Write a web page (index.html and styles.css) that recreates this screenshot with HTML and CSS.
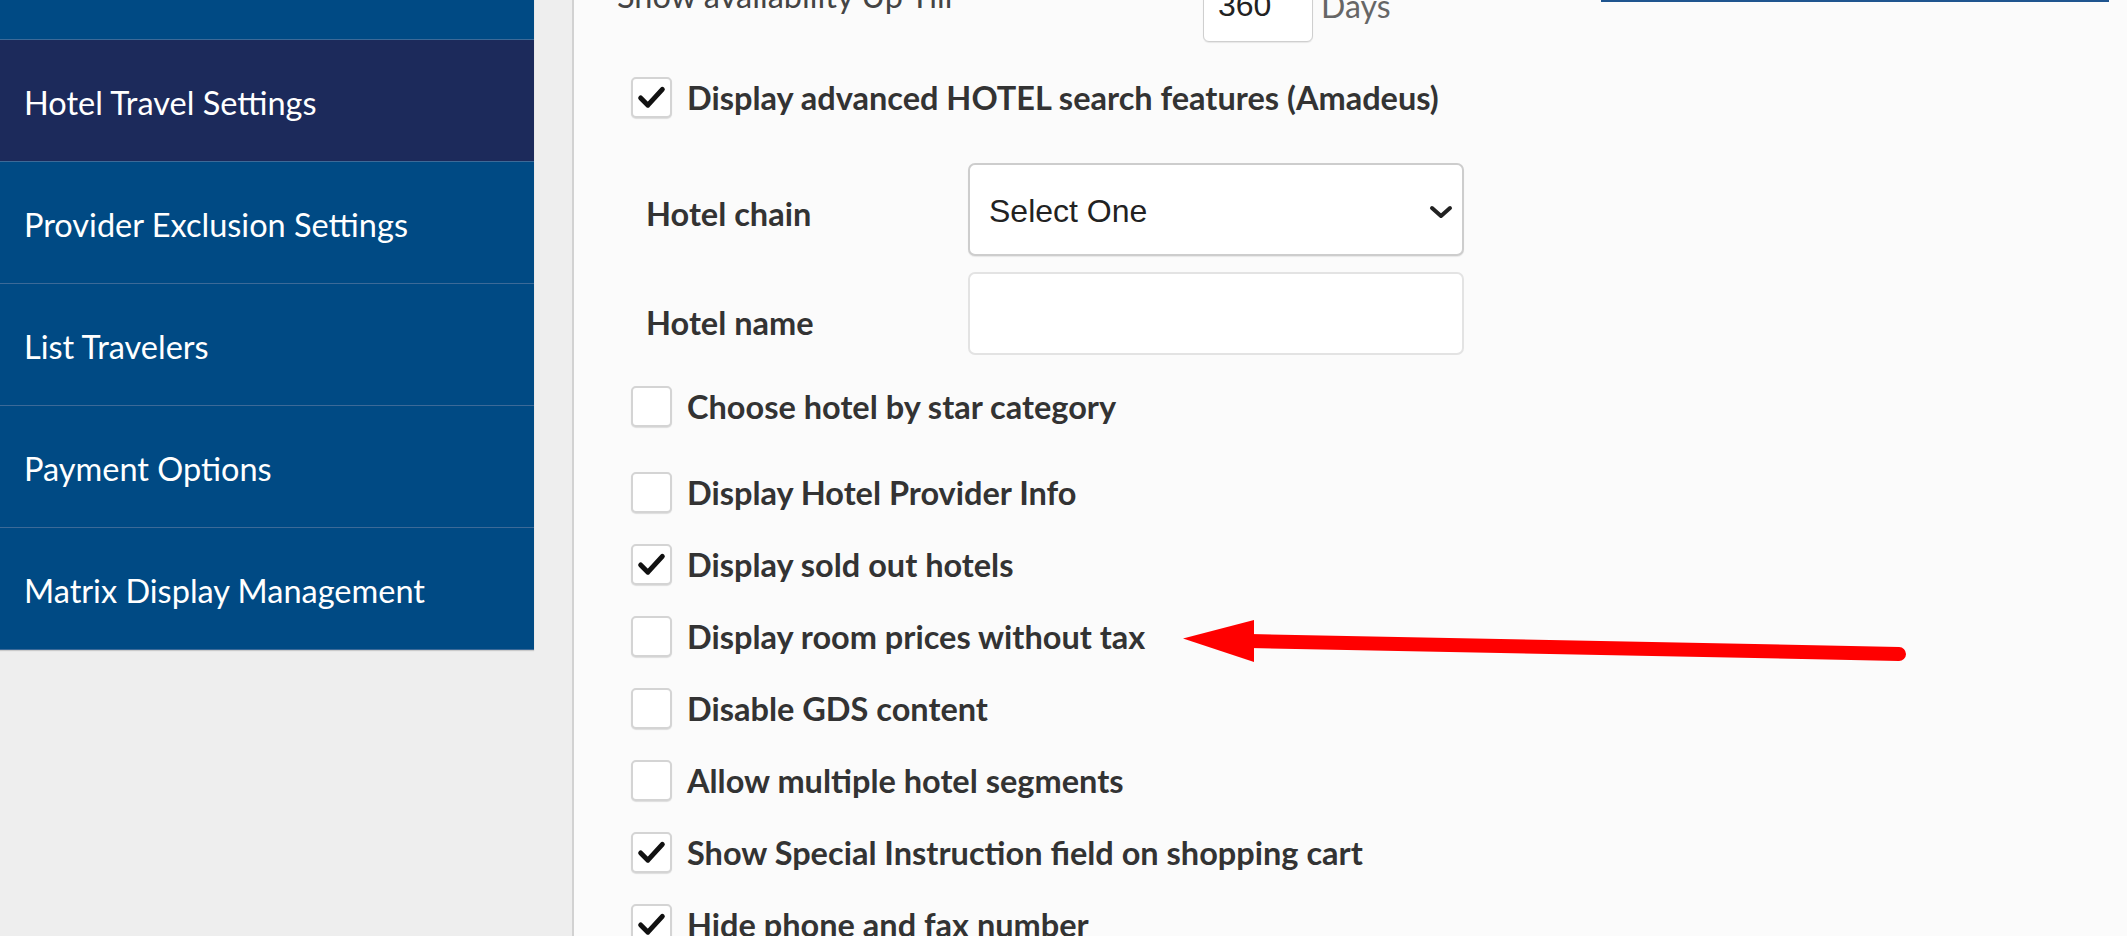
FILE: index.html
```html
<!DOCTYPE html>
<html>
<head>
<meta charset="utf-8">
<link rel="stylesheet" href="styles.css">
</head>
<body>
<div class="page">
  <aside class="leftcol">
    <nav class="sidenav">
      <a class="nav-item">Air Travel Settings</a>
      <a class="nav-item active">Hotel Travel Settings</a>
      <a class="nav-item">Provider Exclusion Settings</a>
      <a class="nav-item">List Travelers</a>
      <a class="nav-item">Payment Options</a>
      <a class="nav-item">Matrix Display Management</a>
    </nav>
  </aside>
  <main class="content">
    <div class="top-row">
      <span class="avail-label">Show availability Up Till</span>
      <span class="days-input">360</span>
      <span class="days-label">Days</span>
      <span class="top-box"></span>
    </div>

    <label class="cb-row first">
      <span class="cb checked"><svg viewBox="0 0 41 41"><path d="M8.5 21 L16.5 29 L32.5 11.5"/></svg></span>
      <span class="cb-text">Display advanced HOTEL search features (Amadeus)</span>
    </label>

    <div class="field-row chain">
      <span class="field-label">Hotel chain</span>
      <div class="select">
        <span>Select One</span>
        <svg class="chev" viewBox="0 0 24 14"><path d="M3 3 L12 11 L21 3"/></svg>
      </div>
    </div>
    <div class="field-row name">
      <span class="field-label">Hotel name</span>
      <div class="text-input"></div>
    </div>

    <label class="cb-row">
      <span class="cb"></span>
      <span class="cb-text">Choose hotel by star category</span>
    </label>
    <label class="cb-row wide">
      <span class="cb"></span>
      <span class="cb-text">Display Hotel Provider Info</span>
    </label>
    <label class="cb-row">
      <span class="cb checked"><svg viewBox="0 0 41 41"><path d="M8.5 21 L16.5 29 L32.5 11.5"/></svg></span>
      <span class="cb-text">Display sold out hotels</span>
    </label>
    <label class="cb-row">
      <span class="cb"></span>
      <span class="cb-text">Display room prices without tax</span>
    </label>
    <label class="cb-row">
      <span class="cb"></span>
      <span class="cb-text">Disable GDS content</span>
    </label>
    <label class="cb-row">
      <span class="cb"></span>
      <span class="cb-text">Allow multiple hotel segments</span>
    </label>
    <label class="cb-row">
      <span class="cb checked"><svg viewBox="0 0 41 41"><path d="M8.5 21 L16.5 29 L32.5 11.5"/></svg></span>
      <span class="cb-text">Show Special Instruction field on shopping cart</span>
    </label>
    <label class="cb-row">
      <span class="cb checked"><svg viewBox="0 0 41 41"><path d="M8.5 21 L16.5 29 L32.5 11.5"/></svg></span>
      <span class="cb-text">Hide phone and fax number</span>
    </label>

    <svg class="annot-arrow" viewBox="0 0 740 60" width="740" height="60">
      <line x1="70" y1="31" x2="719" y2="44" />
      <polygon points="3,28.5 74,10 74,52" />
    </svg>
  </main>
</div>
</body>
</html>
```

FILE: styles.css
```css
html, body {
  margin: 0;
  padding: 0;
  width: 2127px;
  height: 936px;
  overflow: hidden;
  background: #fbfbfb;
}

.page {
  display: flex;
  height: 936px;
  font-family: "Lato", "Liberation Sans", sans-serif;
}

.leftcol {
  width: 572px;
  flex: 0 0 572px;
  background: #eeeeee;
  border-right: 2px solid #d2d2d2;
}

.sidenav {
  width: 534px;
  margin-top: -82px;
  display: flex;
  flex-direction: column;
  box-shadow: 0 1px 1px rgba(0,0,0,0.15);
}

.nav-item {
  display: flex;
  align-items: center;
  padding-left: 24px;
  padding-top: 4px;
  box-sizing: border-box;
  height: 122px;
  background: #004a84;
  border-bottom: 1px solid #3c6a98;
  color: #ffffff;
  font-size: 32.5px;
  white-space: nowrap;
  text-decoration: none;
}

.nav-item.active {
  background: #1c2a5b;
}

.content {
  position: relative;
  flex: 1;
  background: #fbfbfb;
  padding-left: 57px;
  color: #333333;
}

.top-row {
  display: flex;
  align-items: flex-start;
  height: 60px;
  margin-top: -18px;
}

.avail-label {
  margin-left: -14px;
  width: 586px;
  flex: 0 0 586px;
  font-size: 32.5px;
  line-height: 30px;
  color: #444;
  margin-top: -1px;
  white-space: nowrap;
}

.days-input {
  width: 110px;
  height: 60px;
  box-sizing: border-box;
  border: 1px solid #cfcfcf;
  border-radius: 6px;
  background: #fff;
  font-family: "Liberation Sans", Arial, sans-serif;
  font-size: 32px;
  line-height: 32px;
  padding: 6px 0 0 14px;
  color: #222;
  box-shadow: 0 1px 1px rgba(0,0,0,0.08);
}

.days-label {
  margin-left: 8px;
  font-size: 32px;
  line-height: 30px;
  margin-top: 9px;
  color: #666;
}

.top-box {
  margin-left: auto;
  margin-right: 18px;
  width: 508px;
  height: 18px;
  border-bottom: 2px solid #1f558f;
  align-self: flex-start;
}

.cb-row {
  display: flex;
  align-items: center;
  height: 41px;
  margin-top: 31px;
  cursor: pointer;
}

.cb-row.first {
  margin-top: 35px;
}

.cb-row.wide {
  margin-top: 45px;
}

.cb {
  width: 41px;
  height: 41px;
  box-sizing: border-box;
  border: 2px solid #d4d4d4;
  border-radius: 5px;
  background: #ffffff;
  box-shadow: 0 1px 1px rgba(0,0,0,0.12);
  flex: 0 0 41px;
  display: flex;
}

.cb svg {
  width: 37px;
  height: 37px;
  margin: 0;
}

.cb svg path {
  fill: none;
  stroke: #111;
  stroke-width: 5.5;
  stroke-linecap: round;
  stroke-linejoin: round;
}

.cb-text {
  margin-left: 15px;
  font-size: 32.5px;
  font-weight: 700;
  color: #333;
  white-space: nowrap;
}

.field-row {
  display: flex;
  align-items: flex-start;
}

.field-row.chain {
  margin-top: 45px;
}

.field-row.name {
  margin-top: 16px;
}

.field-label {
  width: 322px;
  padding-left: 15px;
  padding-top: 31px;
  line-height: 40px;
  font-size: 32.5px;
  font-weight: 700;
  color: #333;
  white-space: nowrap;
}

.select {
  width: 496px;
  height: 93px;
  box-sizing: border-box;
  border: 2px solid #cdcdcd;
  border-radius: 7px;
  background: #fff;
  display: flex;
  align-items: center;
  justify-content: space-between;
  padding: 4px 9px 0 19px;
  font-family: "Liberation Sans", Arial, sans-serif;
  font-size: 32px;
  color: #222;
  box-shadow: 0 1px 1px rgba(0,0,0,0.08);
}

.chev {
  width: 24px;
  height: 14px;
}

.chev path {
  fill: none;
  stroke: #222;
  stroke-width: 4;
  stroke-linecap: round;
  stroke-linejoin: round;
}

.text-input {
  width: 496px;
  height: 83px;
  box-sizing: border-box;
  border: 2px solid #e3e3e3;
  border-radius: 7px;
  background: #fff;
}

.annot-arrow {
  position: absolute;
  left: 606px;
  top: 610px;
}

.annot-arrow line {
  stroke: #ff0000;
  stroke-width: 14;
  stroke-linecap: round;
}

.annot-arrow polygon {
  fill: #ff0000;
}
```
